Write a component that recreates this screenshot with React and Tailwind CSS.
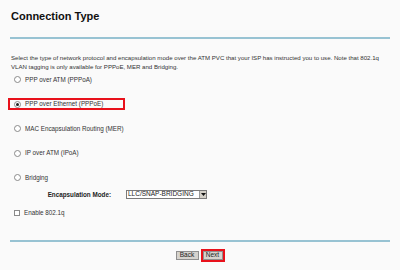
const options = [
  { label: 'PPP over ATM (PPPoA)', checked: false },
  { label: 'PPP over Ethernet (PPPoE)', checked: true, highlight: true },
  { label: 'MAC Encapsulation Routing (MER)', checked: false },
  { label: 'IP over ATM (IPoA)', checked: false },
  { label: 'Bridging', checked: false },
];

const Radio = ({ checked }) => (
  <span className="w-[7px] h-[7px] rounded-full border border-[#8a8a8a] bg-white flex items-center justify-center shrink-0">
    {checked && <span className="w-[3px] h-[3px] rounded-full bg-[#222]" />}
  </span>
);

export default function App() {
  return (
    <div className="w-[400px] h-[270px] bg-[#fafafa] text-[#222] overflow-hidden" style={{ fontFamily: '"Liberation Sans", Arial, sans-serif' }}>
      <div className="px-[10px]">
        <h1 className="pt-[10px] pl-[1px] text-[11px] font-bold leading-[13px] text-[#111]">Connection Type</h1>
        <div className="mt-[14px] h-[2px] w-[380px] bg-[#98c3d3]" />

        <p className="mt-[14px] pl-[1px] pr-[4px] text-[6.1px] leading-[9px] text-[#333]">
          Select the type of network protocol and encapsulation mode over the ATM PVC that your ISP has instructed you to use. Note that 802.1q VLAN tagging is only available for PPPoE, MER and Bridging.
        </p>

        <div className="mt-[2.5px] flex flex-col gap-[12.5px]">
          {options.map((o) => (
            <div key={o.label} className="h-[12px] flex items-center">
              <div className={`flex items-center gap-[4px] h-[12px] ${o.highlight ? 'border-2 border-[#e8111b] w-[117px] -ml-[2px] pl-[4px]' : 'pl-[4px]'}`}>
                <Radio checked={o.checked} />
                <span className="text-[6.3px] text-[#333]">{o.label}</span>
              </div>
            </div>
          ))}
        </div>

        <div className="flex items-center mt-[6px] h-[10px]">
          <span className="w-[101px] text-right text-[6.3px] font-bold text-[#222]">Encapsulation Mode:</span>
          <div className="ml-[15px] h-[9px] w-[81px] border border-[#7a7a7a] bg-white flex items-center">
            <span className="flex-1 pl-[1px] text-[6.5px] leading-none text-[#222]">LLC/SNAP-BRIDGING</span>
            <span className="w-[7px] h-[7px] bg-[#d4d0c8] border-l border-[#999] flex items-center justify-center">
              <svg width="5" height="3" viewBox="0 0 5 3"><path d="M0 0h5L2.5 3z" fill="#111" /></svg>
            </span>
          </div>
        </div>

        <div className="flex items-center gap-[4px] pl-[4px] mt-[8px] h-[10px]">
          <span className="w-[6px] h-[6px] border border-[#8a8a8a] bg-white" />
          <span className="text-[6.3px] text-[#333]">Enable 802.1q</span>
        </div>

        <div className="mt-[22px] h-[2px] w-[380px] bg-[#98c3d3]" />

        <div className="mt-[7px] flex justify-center items-center gap-[2px]">
          <button className="h-[9px] w-[23px] bg-[#d6d3ce] border border-[#8f8f8f] text-[6.5px] leading-none text-[#222]">Back</button>
          <div className="border-2 border-[#e8111b]">
            <button className="h-[9px] w-[20px] bg-[#d6d3ce] border border-[#8f8f8f] text-[6.5px] leading-none text-[#222] block">Next</button>
          </div>
        </div>
      </div>
    </div>
  );
}
